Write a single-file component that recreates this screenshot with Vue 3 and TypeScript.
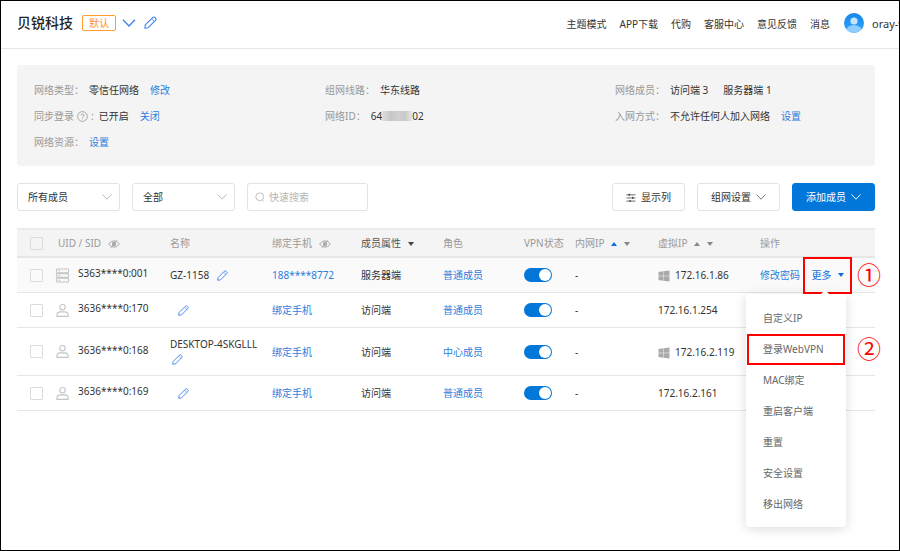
<script setup lang="ts">
import { ref } from 'vue'

interface Member {
  uid: string
  kind: 'server' | 'client'
  name: string
  phone: string
  attribute: string
  role: string
  vpn: boolean
  lan: string
  ip: string
  windows: boolean
}

const navLinks: string[] = ['主题模式', 'APP下载', '代购', '客服中心', '意见反馈', '消息']
const menuItems: string[] = ['自定义IP', '登录WebVPN', 'MAC绑定', '重启客户端', '重置', '安全设置', '移出网络']
const marked = '登录WebVPN'

const members = ref<Member[]>([
  { uid: 'S363****0:001', kind: 'server', name: 'GZ-1158', phone: '188****8772', attribute: '服务器端', role: '普通成员', vpn: true, lan: '-', ip: '172.16.1.86', windows: true },
  { uid: '3636****0:170', kind: 'client', name: '', phone: '绑定手机', attribute: '访问端', role: '普通成员', vpn: true, lan: '-', ip: '172.16.1.254', windows: false },
  { uid: '3636****0:168', kind: 'client', name: 'DESKTOP-4SKGLLL', phone: '绑定手机', attribute: '访问端', role: '中心成员', vpn: true, lan: '-', ip: '172.16.2.119', windows: true },
  { uid: '3636****0:169', kind: 'client', name: '', phone: '绑定手机', attribute: '访问端', role: '普通成员', vpn: true, lan: '-', ip: '172.16.2.161', windows: false },
])

const scope = ref('所有成员')
const filter = ref('全部')
const keyword = ref('')
const menuOpen = ref(true)
</script>

<template>
  <div class="page">
    <svg class="sprite" aria-hidden="true">
      <symbol id="pencil" viewBox="0 0 12 12">
        <g fill="none" stroke="currentColor" stroke-linejoin="round">
          <path d="M.8 11.200 1.200 8.200 8 1.400Q9.200.3 10.400 1.600 11.700 2.800 10.600 4L3.800 10.800Z" />
          <path d="M7.200 2.400 9.600 4.800" stroke-width=".8" />
        </g>
      </symbol>
      <symbol id="chevron" viewBox="0 0 10 6">
        <path d="M.5.5 5 5.200 9.500.5" fill="none" stroke="currentColor" stroke-width="1" />
      </symbol>
      <symbol id="eye-off" viewBox="0 0 12 10">
        <path d="M.6 5Q3 1.800 6 1.800T11.400 5Q9 8.200 6 8.200T.6 5Z" fill="none" stroke="currentColor" />
        <circle cx="6" cy="5" r="2.200" fill="currentColor" />
        <path d="M3 8.800 9 1.200" stroke="currentColor" />
      </symbol>
      <symbol id="server" viewBox="0 0 16 16">
        <g fill="none" stroke="currentColor" stroke-width="1.100">
          <rect x="1.500" y="1" width="13" height="4" rx="1" />
          <rect x="1.500" y="6" width="13" height="4" rx="1" />
          <rect x="1.500" y="11" width="13" height="4" rx="1" />
          <path d="M3.500 3h2M3.500 8h2M3.500 13h2" />
        </g>
      </symbol>
      <symbol id="client" viewBox="0 0 16 16">
        <g fill="none" stroke="currentColor" stroke-width="1.200">
          <circle cx="8" cy="4.500" r="2.900" />
          <path d="M2 14.300Q1.600 9.400 6 9.400H10Q14.400 9.400 14 14.300Z" stroke-linejoin="round" />
        </g>
      </symbol>
      <symbol id="windows" viewBox="0 0 12 12">
        <path d="M.5 2 5.300 1.300V5.800H.5ZM5.700 1.200 11.500.4V5.800H5.700ZM.5 6.200H5.300V10.700L.5 10ZM5.700 6.200H11.500V11.600L5.700 10.800Z" fill="currentColor" />
      </symbol>
    </svg>

    <header class="topbar">
      <h1 class="brand">贝锐科技</h1>
      <span class="badge">默认</span>
      <button class="icon-btn" type="button" aria-label="切换网络"><svg class="chev-lg"><use href="#chevron" /></svg></button>
      <button class="icon-btn" type="button" aria-label="编辑"><svg class="pencil-lg"><use href="#pencil" /></svg></button>
      <nav class="nav">
        <a v-for="link in navLinks" :key="link" href="#">{{ link }}</a>
      </nav>
      <a class="account" href="#">
        <svg class="avatar" viewBox="0 0 20 20">
          <defs>
            <linearGradient id="sky" x1="0" y1="0" x2="0" y2="1">
              <stop offset="0" stop-color="#1687ea" />
              <stop offset="1" stop-color="#35a4fa" />
            </linearGradient>
            <clipPath id="disc"><circle cx="10" cy="10" r="10" /></clipPath>
          </defs>
          <g clip-path="url(#disc)">
            <rect width="20" height="20" fill="url(#sky)" />
            <ellipse cx="10" cy="18" rx="8" ry="6" fill="#8fccff" />
            <circle cx="10" cy="8" r="3.600" fill="#c4e4ff" />
          </g>
        </svg>
        <span class="user">oray-v</span>
      </a>
    </header>

    <main class="content">
      <section class="summary">
        <dl>
          <div><dt>网络类型：</dt><dd>零信任网络 <a href="#">修改</a></dd></div>
          <div>
            <dt>同步登录
              <svg class="help" viewBox="0 0 12 12"><circle cx="6" cy="6" r="5.300" fill="none" stroke="currentColor" stroke-width=".9" /><path d="M4.400 4.800Q4.500 3.200 6 3.200T7.600 4.700Q7.500 5.500 6.600 6Q6 6.400 6 7.200M6 8.200V9.200" fill="none" stroke="currentColor" stroke-width=".9" /></svg>
              :</dt>
            <dd>已开启 <a href="#">关闭</a></dd>
          </div>
          <div><dt>网络资源：</dt><dd><a href="#">设置</a></dd></div>
        </dl>
        <dl>
          <div><dt>组网线路：</dt><dd>华东线路</dd></div>
          <div><dt>网络ID：</dt><dd class="masked">64<span class="mosaic"></span>02</dd></div>
        </dl>
        <dl>
          <div><dt>网络成员：</dt><dd><span>访问端 3</span><span class="next">服务器端 1</span></dd></div>
          <div><dt>入网方式：</dt><dd>不允许任何人加入网络 <a href="#">设置</a></dd></div>
        </dl>
      </section>

      <form class="toolbar" @submit.prevent>
        <label class="select">
          <select v-model="scope" aria-label="成员范围"><option>所有成员</option></select>
          <svg class="chev"><use href="#chevron" /></svg>
        </label>
        <label class="select">
          <select v-model="filter" aria-label="筛选"><option>全部</option></select>
          <svg class="chev"><use href="#chevron" /></svg>
        </label>
        <label class="search">
          <svg viewBox="0 0 12 12"><circle cx="5.700" cy="5.700" r="4.700" fill="none" stroke="currentColor" /><path d="M8.500 9.500 10.500 11.200" stroke="currentColor" /></svg>
          <input v-model="keyword" type="text" placeholder="快速搜索" aria-label="快速搜索" />
        </label>
        <div class="actions">
          <button class="btn" type="button">
            <svg class="sliders" viewBox="0 0 10 10"><path d="M0 2H10M0 5.500H10M0 9H10" stroke="currentColor" stroke-width=".8" /><path d="M3 .8V3.200M7 4.300V6.700M4 7.800V10" stroke="currentColor" stroke-width="1.200" /></svg>
            显示列
          </button>
          <button class="btn" type="button">组网设置<svg class="chev-sm"><use href="#chevron" /></svg></button>
          <button class="btn primary" type="button">添加成员<svg class="chev-sm"><use href="#chevron" /></svg></button>
        </div>
      </form>

      <table class="members">
        <colgroup>
          <col class="c-check" /><col class="c-uid" /><col class="c-name" /><col class="c-phone" /><col class="c-attr" />
          <col class="c-role" /><col class="c-vpn" /><col class="c-lan" /><col class="c-ip" /><col class="c-ops" />
        </colgroup>
        <thead>
          <tr>
            <th class="check"><input class="box" type="checkbox" aria-label="全选" /></th>
            <th class="uid-head">UID / SID <svg class="eye"><use href="#eye-off" /></svg></th>
            <th>名称</th>
            <th>绑定手机 <svg class="eye"><use href="#eye-off" /></svg></th>
            <th class="dark">成员属性 <i class="tri down"></i></th>
            <th>角色</th>
            <th>VPN状态</th>
            <th>内网IP <i class="tri up on"></i><i class="tri down"></i></th>
            <th>虚拟IP <i class="tri up"></i><i class="tri down"></i></th>
            <th>操作</th>
          </tr>
        </thead>
        <tbody>
          <tr v-for="(m, i) in members" :key="m.uid" :class="{ active: i === 0, tall: m.name.length > 12 }">
            <td class="check"><input class="box" type="checkbox" :aria-label="m.uid" /></td>
            <td>
              <div class="uid">
                <svg class="device"><use :href="'#' + m.kind" /></svg>
                <span>{{ m.uid }}</span>
              </div>
            </td>
            <td>
              <div class="name">
                <span v-if="m.name">{{ m.name }}</span>
                <button class="icon-btn edit" type="button" aria-label="编辑名称"><svg class="pencil"><use href="#pencil" /></svg></button>
              </div>
            </td>
            <td><a href="#">{{ m.phone }}</a></td>
            <td>{{ m.attribute }}</td>
            <td><a href="#">{{ m.role }}</a></td>
            <td><input v-model="m.vpn" class="switch" type="checkbox" role="switch" aria-label="VPN状态" /></td>
            <td>{{ m.lan }}</td>
            <td><svg v-if="m.windows" class="win"><use href="#windows" /></svg>{{ m.ip }}</td>
            <td>
              <div v-if="i === 0" class="ops">
                <a href="#">修改密码</a>
                <div class="more">
                  <button class="more-btn" type="button" :aria-expanded="menuOpen" @click="menuOpen = !menuOpen">更多<i class="tri down on"></i></button>
                  <span class="step">①</span>
                  <ul v-if="menuOpen" class="menu">
                    <li v-for="item in menuItems" :key="item" :class="{ marked: item === marked }">
                      <a href="#">{{ item }}</a>
                      <span v-if="item === marked" class="step">②</span>
                    </li>
                  </ul>
                </div>
              </div>
            </td>
          </tr>
        </tbody>
      </table>
    </main>
  </div>
</template>

<style>
body {
  background: #fff;
}
</style>

<style scoped>
.page {
  box-sizing: border-box;
  min-height: 100vh;
  border: 1px solid #000;
  background: #fff;
  color: #333;
  font: 10px/16px 'Noto Sans', 'Noto Sans CJK SC', sans-serif;
}
.sprite {
  position: absolute;
  width: 0;
  height: 0;
}
a {
  color: #2b7de0;
  text-decoration: none;
}
button,
input,
select {
  margin: 0;
  padding: 0;
  font: inherit;
  color: inherit;
}
svg {
  flex: none;
}
.icon-btn {
  display: inline-flex;
  border: 0;
  background: none;
  color: #3f83ea;
}

.topbar {
  display: flex;
  align-items: center;
  height: 48px;
  box-sizing: border-box;
  padding-left: 16px;
  padding-bottom: 4px;
  border-bottom: 1px solid #e6e6e6;
  overflow: hidden;
}
.brand {
  margin: 0 9px 0 0;
  font-size: 14px;
  line-height: 20px;
  font-weight: 500;
  color: #222;
}
.badge {
  margin-right: 6px;
  padding: 0 6px;
  border: 1px solid #ff9c2e;
  border-radius: 2px;
  color: #ff8f1c;
  line-height: 14px;
}
.chev-lg {
  width: 14px;
  height: 8px;
  margin-right: 8px;
}
.pencil-lg {
  width: 13px;
  height: 13px;
}
.nav {
  display: flex;
  gap: 13px;
  margin-left: auto;
  padding-top: 2px;
}
.nav a,
.account {
  color: #333;
}
.account {
  display: flex;
  align-items: center;
  gap: 8px;
  margin-left: 14px;
}
.avatar {
  width: 20px;
  height: 20px;
}
.user {
  width: 27px;
  padding-top: 2px;
  font-size: 11px;
  white-space: nowrap;
  overflow: hidden;
}

.content {
  padding: 16px 24px 0 16px;
}
.summary {
  display: grid;
  grid-template-columns: 291fr 290fr 243fr;
  padding: 12px 17px 11px;
  border-radius: 4px;
  background: #f4f4f4;
}
.summary dl {
  margin: 0;
}
.summary dl > div {
  display: flex;
  align-items: center;
  height: 26px;
  white-space: nowrap;
}
.summary dt {
  display: flex;
  align-items: center;
  gap: 3px;
  color: #999;
}
.summary dd {
  display: flex;
  align-items: center;
  gap: 11px;
  margin-left: 5px;
}
.summary .masked {
  gap: 0;
}
.summary .next {
  margin-left: 4px;
}
.help {
  width: 11px;
  height: 11px;
}
.mosaic {
  width: 30px;
  height: 10px;
  background: linear-gradient(90deg, #dedede, #c6c6c6 30%, #d0d0d0 55%, #c8c8c8 75%, #e6e6e6);
}

.toolbar {
  display: flex;
  align-items: center;
  gap: 12px;
  margin: 17px 0;
}
.select,
.search,
.btn {
  display: flex;
  align-items: center;
  box-sizing: border-box;
  height: 28px;
  border: 1px solid #e2e2e2;
  border-radius: 3px;
  background: #fff;
}
.select {
  position: relative;
  width: 103px;
}
.select select {
  width: 100%;
  height: 100%;
  padding: 0 24px 0 10px;
  border: 0;
  background: none;
  appearance: none;
}
.chev {
  position: absolute;
  right: 7px;
  width: 10px;
  height: 6px;
  color: #bbb;
  pointer-events: none;
}
.search {
  width: 121px;
  padding-left: 7px;
  gap: 4px;
  color: #b5b5b5;
}
.search svg {
  width: 10px;
  height: 10px;
}
.search input {
  min-width: 0;
  flex: 1;
  border: 0;
  outline: 0;
  background: none;
  color: #333;
}
.search input::placeholder {
  color: #b5b5b5;
}
.actions {
  display: flex;
  gap: 12px;
  margin-left: auto;
}
.btn {
  padding: 0 13px;
  gap: 5px;
  white-space: nowrap;
}
.btn.primary {
  border-color: #0077d9;
  background: #0077d9;
  color: #fff;
}
.sliders {
  width: 10px;
  height: 9px;
}
.chev-sm {
  width: 10px;
  height: 6px;
  color: #777;
}
.primary .chev-sm {
  color: #fff;
}

.members {
  width: 100%;
  table-layout: fixed;
  border-collapse: separate;
  border-spacing: 0;
}
.c-check { width: 38px; }
.c-uid { width: 115px; }
.c-name { width: 102px; }
.c-phone { width: 89px; }
.c-attr { width: 82px; }
.c-role { width: 81px; }
.c-vpn { width: 51px; }
.c-lan { width: 83px; }
.c-ip { width: 102px; }
.c-ops { width: 115px; }
.members th,
.members td {
  box-sizing: border-box;
  height: 35px;
  padding: 0;
  border-bottom: 1px solid #e6e6e6;
  text-align: left;
  vertical-align: middle;
  font-weight: 400;
}
.members th {
  height: 30px;
  border-top: 2px solid #ebebeb;
  border-bottom: 2px solid #e6e6e6;
  background: #f4f4f4;
  color: #999;
  white-space: nowrap;
}
.members .dark {
  color: #555;
}
.members .check {
  padding-left: 13px;
}
.members .uid-head {
  padding-left: 3px;
}
.active td {
  background: #fafafa;
}
.members .tall td {
  height: 48px;
}
.box {
  display: block;
  box-sizing: border-box;
  width: 13px;
  height: 13px;
  border: 1px solid #dcdcdc;
  border-radius: 1px;
  appearance: none;
}
.eye {
  width: 12px;
  height: 10px;
  margin-left: 4px;
  color: #aaa;
  vertical-align: middle;
}
.tri {
  display: inline-block;
  margin-left: 4px;
  border: 3px solid transparent;
  color: #888;
  vertical-align: middle;
}
.tri + .tri {
  margin-left: 7px;
}
.tri.up {
  border-top-width: 0;
  border-bottom: 4px solid;
}
.tri.down {
  border-bottom-width: 0;
  border-top: 4px solid;
}
.tri.on {
  color: #0a6fe0;
}
.dark .tri {
  color: #444;
}
.uid {
  display: flex;
  align-items: center;
  gap: 8px;
}
.uid span {
  padding-bottom: 4px;
}
.device {
  width: 15px;
  height: 15px;
  color: #c4c4c4;
}
.name {
  display: flex;
  align-items: center;
}
.pencil {
  width: 11px;
  height: 11px;
}
.edit {
  margin-left: 8px;
}
.tall .name {
  flex-direction: column;
  align-items: flex-start;
  gap: 2px;
  padding-bottom: 2px;
}
.tall .edit {
  margin-left: 2px;
}
.switch {
  display: block;
  box-sizing: border-box;
  width: 28px;
  height: 14px;
  padding: 1px;
  border-radius: 7px;
  background: #ccc;
  appearance: none;
}
.switch::before {
  content: '';
  display: block;
  width: 12px;
  height: 12px;
  border-radius: 50%;
  background: #fff;
}
.switch:checked {
  background: #0077d9;
}
.switch:checked::before {
  margin-left: auto;
}
.win {
  width: 12px;
  height: 12px;
  margin-right: 5px;
  color: #aaa;
  vertical-align: middle;
}

.ops {
  display: flex;
  align-items: center;
  gap: 3px;
}
.more {
  position: relative;
  margin: -2px 0;
}
.more-btn {
  display: flex;
  align-items: center;
  justify-content: center;
  gap: 2px;
  box-sizing: border-box;
  width: 49px;
  height: 37px;
  border: 2px solid #f00;
  background: none;
  color: #0a6fe0;
}
.step {
  position: absolute;
  top: 50%;
  left: 100%;
  margin-left: 5px;
  color: #f00;
  font-size: 24px;
  line-height: 24px;
  transform: translateY(-50%);
}
.menu {
  position: absolute;
  top: 37px;
  right: 6px;
  z-index: 1;
  box-sizing: border-box;
  width: 100px;
  margin: 0;
  padding: 9px 0 7px;
  border-radius: 3px;
  background: #fff;
  box-shadow: 0 2px 12px rgba(0, 0, 0, 0.14);
  list-style: none;
}
.menu::before {
  content: '';
  position: absolute;
  top: -4px;
  right: 17px;
  border: 4px solid transparent;
  border-top: 0;
  border-bottom-color: #fff;
}
.menu li {
  position: relative;
}
.menu a {
  display: block;
  margin: 0 1px;
  padding: 0 15px;
  border: 1px solid transparent;
  line-height: 29px;
  color: #666;
}
.menu .marked a {
  padding: 0 14px;
  border: 2px solid #f00;
  line-height: 27px;
}
.menu .step {
  margin-left: 11px;
}
</style>
